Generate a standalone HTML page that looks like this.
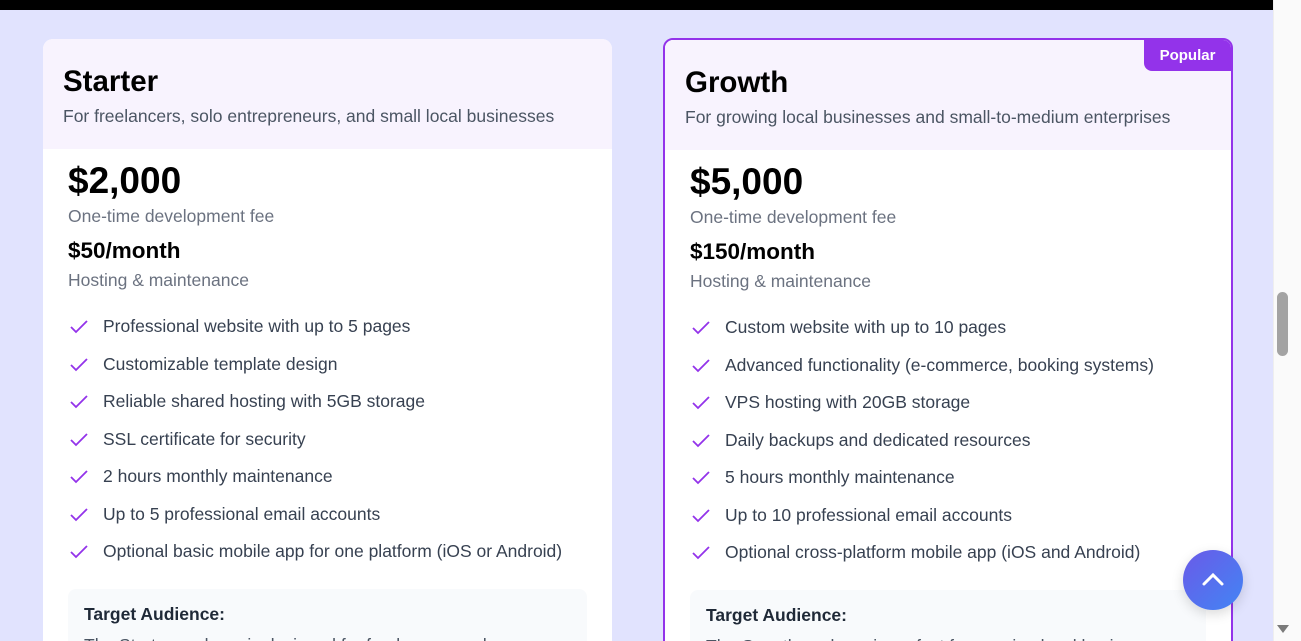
<!DOCTYPE html>
<html><head><style>
*{margin:0;padding:0;box-sizing:border-box}
html,body{width:1301px;height:641px;overflow:hidden}
body{background:#e1e3fe;font-family:"Liberation Sans",sans-serif;position:relative}
.top{position:absolute;left:0;top:0;width:1273px;height:10px;background:#000}
.sb{position:absolute;left:1273px;top:0;width:28px;height:641px;background:#fafafa;border-left:1px solid #eee}
.thumb{position:absolute;left:1277px;top:292px;width:11px;height:64px;background:#a3a3a3;border-radius:6px}
.arr{position:absolute;left:1277px;top:625px;width:0;height:0;border-left:6px solid transparent;border-right:6px solid transparent;border-top:8px solid #7a7a7a}
.card{position:absolute;background:#fff;border-radius:10px;overflow:hidden}
.c1{left:43px;top:39px;width:569px;height:620px}
.c2{left:663px;top:38px;width:570px;height:620px;border:2px solid #9333ea}
.hd{background:#f8f3fe;height:110px;padding:26px 20px 0 20px}
h2{font-size:29.5px;font-weight:bold;color:#000;line-height:34px}
.sub{font-size:17.5px;color:#4b5563;margin-top:7px}
.bd{padding:12px 25px 0 25px}
.price{font-size:37px;font-weight:bold;color:#000;line-height:40px}
.g{font-size:17.5px;color:#6b7280;line-height:22px;margin-top:4px}
.mo{font-size:22.5px;font-weight:bold;color:#000;margin-top:11px;line-height:26px}
ul{list-style:none;margin-top:24px}
li{font-size:17.5px;color:#374151;height:37.5px;position:relative;padding-left:35px;line-height:22px}
li svg{position:absolute;left:1px;top:4px}
.ta{margin-top:11px;background:#f8fafc;border-radius:8px;height:80px;padding:15px 16px;font-size:17.5px;font-weight:bold;color:#1f2937}
.ta p{font-weight:normal;color:#4b5563;margin-top:10px}
.pop{position:absolute;right:0;top:0;width:87px;height:31px;background:#9333ea;color:#fff;font-weight:bold;font-size:15px;text-align:center;line-height:32px;border-bottom-left-radius:8px}
.up{position:absolute;left:1183px;top:550px;width:60px;height:60px;border-radius:50%;background:linear-gradient(135deg,#6a5ae8,#4285f4);box-shadow:0 4px 12px rgba(0,0,0,.15)}
</style></head><body>
<div class="top"></div>
<div class="card c1"><div class="hd"><h2>Starter</h2><div class="sub">For freelancers, solo entrepreneurs, and small local businesses</div></div>
<div class="bd"><div class="price">$2,000</div><div class="g">One-time development fee</div><div class="mo">$50/month</div><div class="g" style="margin-top:5px">Hosting &amp; maintenance</div>
<ul>
<li><svg width="20" height="16" viewBox="0 0 20 16"><path d="M2 8l5 5L18 2" fill="none" stroke="#9333ea" stroke-width="1.8"/></svg>Professional website with up to 5 pages</li>
<li><svg width="20" height="16" viewBox="0 0 20 16"><path d="M2 8l5 5L18 2" fill="none" stroke="#9333ea" stroke-width="1.8"/></svg>Customizable template design</li>
<li><svg width="20" height="16" viewBox="0 0 20 16"><path d="M2 8l5 5L18 2" fill="none" stroke="#9333ea" stroke-width="1.8"/></svg>Reliable shared hosting with 5GB storage</li>
<li><svg width="20" height="16" viewBox="0 0 20 16"><path d="M2 8l5 5L18 2" fill="none" stroke="#9333ea" stroke-width="1.8"/></svg>SSL certificate for security</li>
<li><svg width="20" height="16" viewBox="0 0 20 16"><path d="M2 8l5 5L18 2" fill="none" stroke="#9333ea" stroke-width="1.8"/></svg>2 hours monthly maintenance</li>
<li><svg width="20" height="16" viewBox="0 0 20 16"><path d="M2 8l5 5L18 2" fill="none" stroke="#9333ea" stroke-width="1.8"/></svg>Up to 5 professional email accounts</li>
<li><svg width="20" height="16" viewBox="0 0 20 16"><path d="M2 8l5 5L18 2" fill="none" stroke="#9333ea" stroke-width="1.8"/></svg>Optional basic mobile app for one platform (iOS or Android)</li>
</ul>
<div class="ta">Target Audience:<p>The Starter package is designed for freelancers and</p></div></div></div>
<div class="card c2"><div class="pop">Popular</div><div class="hd"><h2>Growth</h2><div class="sub">For growing local businesses and small-to-medium enterprises</div></div>
<div class="bd"><div class="price">$5,000</div><div class="g">One-time development fee</div><div class="mo">$150/month</div><div class="g" style="margin-top:5px">Hosting &amp; maintenance</div>
<ul>
<li><svg width="20" height="16" viewBox="0 0 20 16"><path d="M2 8l5 5L18 2" fill="none" stroke="#9333ea" stroke-width="1.8"/></svg>Custom website with up to 10 pages</li>
<li><svg width="20" height="16" viewBox="0 0 20 16"><path d="M2 8l5 5L18 2" fill="none" stroke="#9333ea" stroke-width="1.8"/></svg>Advanced functionality (e-commerce, booking systems)</li>
<li><svg width="20" height="16" viewBox="0 0 20 16"><path d="M2 8l5 5L18 2" fill="none" stroke="#9333ea" stroke-width="1.8"/></svg>VPS hosting with 20GB storage</li>
<li><svg width="20" height="16" viewBox="0 0 20 16"><path d="M2 8l5 5L18 2" fill="none" stroke="#9333ea" stroke-width="1.8"/></svg>Daily backups and dedicated resources</li>
<li><svg width="20" height="16" viewBox="0 0 20 16"><path d="M2 8l5 5L18 2" fill="none" stroke="#9333ea" stroke-width="1.8"/></svg>5 hours monthly maintenance</li>
<li><svg width="20" height="16" viewBox="0 0 20 16"><path d="M2 8l5 5L18 2" fill="none" stroke="#9333ea" stroke-width="1.8"/></svg>Up to 10 professional email accounts</li>
<li><svg width="20" height="16" viewBox="0 0 20 16"><path d="M2 8l5 5L18 2" fill="none" stroke="#9333ea" stroke-width="1.8"/></svg>Optional cross-platform mobile app (iOS and Android)</li>
</ul>
<div class="ta">Target Audience:<p>The Growth package is perfect for growing local businesses</p></div></div></div>
<div class="up"><svg width="60" height="60" viewBox="0 0 60 60"><path d="M21 34l9-9 9 9" fill="none" stroke="#fff" stroke-width="3" stroke-linecap="round"/></svg></div>
<div class="sb"></div><div class="thumb"></div><div class="arr"></div>
</body></html>
